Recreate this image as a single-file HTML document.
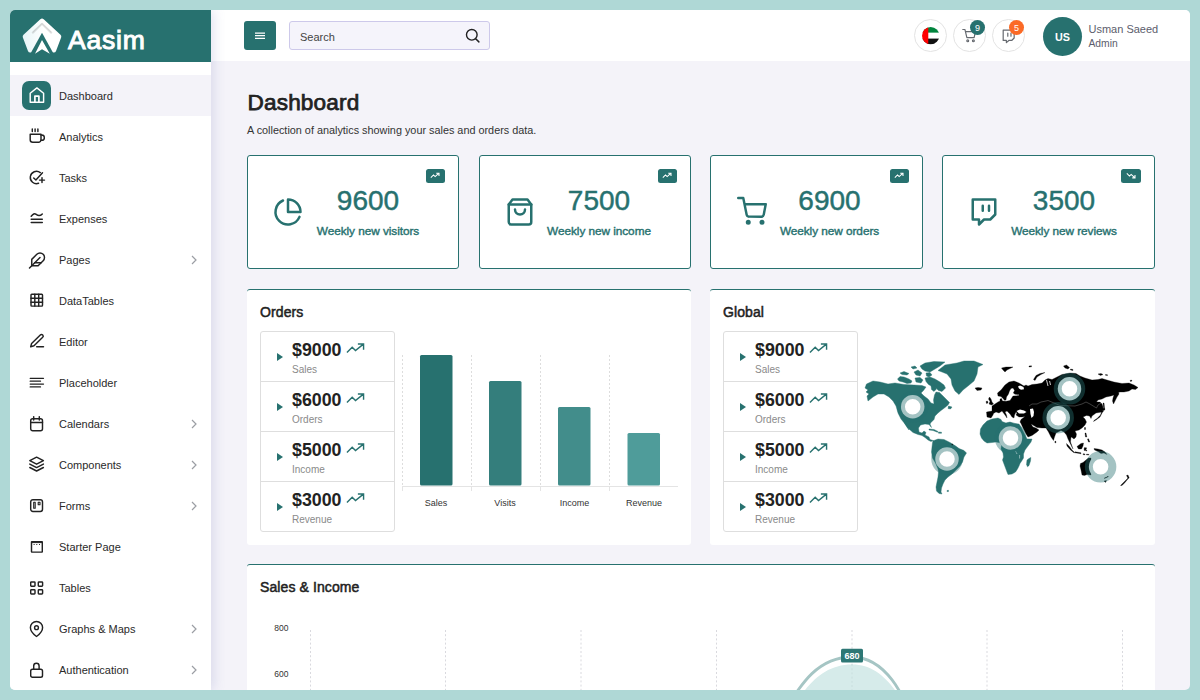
<!DOCTYPE html>
<html><head><meta charset="utf-8"><title>Dashboard</title>
<style>
*{box-sizing:border-box;margin:0;padding:0}
html,body{width:1200px;height:700px;overflow:hidden}
body{background:#afd8d6;font-family:"Liberation Sans",sans-serif;color:#222;position:relative}
.app{position:absolute;left:10px;top:10px;width:1180px;height:680px;border-radius:5px;overflow:hidden;background:#f4f3f9}
.side{position:absolute;left:0;top:0;width:201px;height:680px;background:#fff;box-shadow:3px 0 11px rgba(90,95,170,.17)}
.brand{position:absolute;left:0;top:0;width:201px;height:52px;background:#27716f}
.brand .t{position:absolute;left:58px;top:15px;font-size:26.5px;font-weight:400;color:#fff;line-height:30px;-webkit-text-stroke:1px #fff;letter-spacing:.8px}
.nav{position:absolute;left:0;top:65px;width:201px}
.it{position:relative;height:41px}
.it.act{background:#f4f3f9}
.it .ic{position:absolute;left:12px;top:6px;width:29px;height:29px;border-radius:7px}
.it.act .ic{background:#27716f}
.it .ic svg{position:absolute;left:6px;top:6px;width:18px;height:18px;fill:none;stroke:#222;stroke-width:1.45;stroke-linecap:round;stroke-linejoin:round}
.it.act .ic svg{stroke:#fff}
.it .lb{position:absolute;left:49px;top:0;line-height:42px;font-size:11px;color:#2a2a2a;white-space:nowrap}
.it .ch{position:absolute;left:180px;top:15.5px;width:8px;height:10px}
.top{position:absolute;left:201px;top:0;width:979px;height:51.400px;background:#fff}
.main{position:absolute;left:201px;top:52px;width:979px;height:628px}
.tg{position:absolute;left:33px;top:11px;width:32px;height:29px;border-radius:3px;background:#27716f}
.tg svg{position:absolute;left:11px;top:11.2px;width:10px;height:8px}
.sr{position:absolute;left:78px;top:11px;width:201px;height:29px;border:1px solid #cdc9ea;border-radius:3px;background:#f5f4fb}
.sr span{position:absolute;left:10px;top:1px;line-height:29px;font-size:11px;color:#444}
.sr svg{position:absolute;left:174px;top:5px;width:17px;height:17px;fill:none;stroke:#222;stroke-width:2;stroke-linecap:round}
.cb{position:absolute;top:9px;width:33px;height:33px;margin-left:-1px;border-radius:50%;border:1px solid #e3e3e3;background:#fff}
.cb .flag{position:absolute;left:7.3px;top:7.2px;width:17.400px;height:17.400px}
.cb .ci{position:absolute;left:7px;top:7.3px;width:17px;height:17px;fill:none;stroke:#666a70;stroke-width:1.700;stroke-linejoin:round;stroke-linecap:round}
.bd{position:absolute;left:16px;top:.3px;width:15px;height:15px;border-radius:50%;color:#fff;font-size:9px;line-height:16.5px;text-align:center}
.av{position:absolute;left:832px;top:7px;width:39px;height:39px;border-radius:50%;background:#27716f;color:#fff;font-weight:700;font-size:10.8px;line-height:41.5px;text-align:center}
.un{position:absolute;left:877.5px;top:12px;font-size:11px;line-height:14px;color:#5c5d6c;white-space:nowrap}
.ur{position:absolute;left:877.5px;top:27px;font-size:10.3px;line-height:14px;color:#5c5d6c}
.h1{position:absolute;left:36.5px;top:27px;font-size:22.6px;font-weight:400;line-height:28px;color:#222;letter-spacing:.15px;-webkit-text-stroke:.75px #222}
.sub{position:absolute;left:36px;top:61px;font-size:10.850px;line-height:14px;color:#333;white-space:nowrap}
.st{position:absolute;top:93px;width:212px;height:114px;border:1px solid #27716f;border-radius:3px;background:#fff}
.st .si{position:absolute;left:25px;top:41px;width:30px;height:30px;fill:none;stroke:#27716f;stroke-width:2;stroke-linecap:round;stroke-linejoin:round}
.st .sn{position:absolute;left:20px;width:200px;top:27px;text-align:center;font-size:28px;line-height:36px;color:#27716f;-webkit-text-stroke:.45px #27716f}
.st .sl{position:absolute;left:20px;width:200px;top:68px;text-align:center;font-size:11.8px;line-height:14px;color:#27716f;font-weight:400;-webkit-text-stroke:.4px #27716f;letter-spacing:-.05px}
.st .sb{position:absolute;right:13px;top:13px;width:19.5px;height:14.400px;border-radius:2.5px;background:#27716f}
.st .sb svg{position:absolute;left:4.400px;top:3.2px;width:10px;height:7px;fill:none;stroke:#fff;stroke-width:1.3}
.pn{position:absolute;background:#fff;border-top:1px solid #27716f;border-radius:3px}
.pt{position:absolute;left:13px;top:12.5px;font-size:14px;font-weight:400;line-height:18px;color:#222;letter-spacing:.1px;-webkit-text-stroke:.5px #222}
.lg{position:absolute;left:13px;top:41px;width:135px;height:201px;border:1px solid #dedede;border-radius:3px}
.li{position:relative;height:50px;border-bottom:1px solid #dedede}
.li:last-child{border-bottom:0}
.li i{position:absolute;left:16.3px;top:21.100px;width:0;height:0;border-left:6.5px solid #27716f;border-top:4.2px solid transparent;border-bottom:4.2px solid transparent}
.li b{position:absolute;left:31px;top:7px;font-size:17.8px;line-height:22px;color:#222}
.li svg{position:absolute;left:85px;top:11px;width:19px;height:11.400px;fill:none;stroke:#27716f;stroke-width:1.5}
.li span{position:absolute;left:31px;top:30.700px;font-size:10px;line-height:14px;color:#8a8a8a}
.bars{position:absolute;left:140px;top:50px;font-family:"Liberation Sans",sans-serif}
.map{position:absolute;left:150px;top:60px}
.line{position:absolute;left:0;top:0;font-family:"Liberation Sans",sans-serif}
.logo{position:absolute;left:10px;top:5px}
.s2 .sn,.s2 .sl{margin-left:-1px}
.s3 .sn,.s3 .sl{margin-left:-1.5px}
.s3 .si{margin-left:.8px;margin-top:-.8px}
.s4 .sn,.s4 .sl{margin-left:1px}
.s4 .si{margin-left:.8px}
.s4 .sb{width:20.5px}
.s4 .sb svg{left:5px}

</style></head><body>
<div class="app">
<div class="main">
<div class="h1">Dashboard</div>
<div class="sub">A collection of analytics showing your sales and orders data.</div>

<div class="st" style="left:36px"><svg class="si" viewBox="0 0 24 24"><path d="M21.2 15.900A10 10 0 1 1 8 2.8"/><path d="M22 12A10 10 0 0 0 12 2v10z"/></svg><div class="sn">9600</div><div class="sl">Weekly new visitors</div><div class="sb"><svg viewBox="0 0 12 8"><path d="M1 6.5l3.2-3.2 2 2L10.5 1.5M7.5 1.2h3.3v3.3"/></svg></div></div>
<div class="st s2" style="left:268px"><svg class="si" viewBox="0 0 24 24"><path d="M6 2L3 6v14a2 2 0 0 0 2 2h14a2 2 0 0 0 2-2V6l-3-4z"/><path d="M3 6h18"/><path d="M16 10a4 4 0 0 1-8 0"/></svg><div class="sn">7500</div><div class="sl">Weekly new income</div><div class="sb"><svg viewBox="0 0 12 8"><path d="M1 6.5l3.2-3.2 2 2L10.5 1.5M7.5 1.2h3.3v3.3"/></svg></div></div>
<div class="st s3" style="left:499px;width:213px"><svg class="si" viewBox="0 0 24 24"><path d="M1 1.5h4l2.700 13.400a2 2 0 0 0 2 1.6h9.700a2 2 0 0 0 2-1.6L23 6.5H6"/><circle cx="9" cy="21" r="1"/><circle cx="20" cy="21" r="1"/></svg><div class="sn">6900</div><div class="sl">Weekly new orders</div><div class="sb"><svg viewBox="0 0 12 8"><path d="M1 6.5l3.2-3.2 2 2L10.5 1.5M7.5 1.2h3.3v3.3"/></svg></div></div>
<div class="st s4" style="left:731px;width:213px"><svg class="si" viewBox="0 0 24 24"><path d="M21 2H3v16h5v4l4-4h5l4-4V2z"/><path d="M11 7v4M16 7v4"/></svg><div class="sn">3500</div><div class="sl">Weekly new reviews</div><div class="sb"><svg viewBox="0 0 12 8"><path d="M1 1.5l3.2 3.2 2-2L10.5 6.5M7.5 6.8h3.3V3.5"/></svg></div></div>

<div class="pn" style="left:36px;top:227px;width:444px;height:256px"><div class="pt">Orders</div>
<div class="lg"><div class="li"><i></i><b>$9000</b><svg viewBox="0 0 20 12"><path d="M1 10l5.5-5.5 3.5 3.5L18 1.5M12.5 1h6v6"/></svg><span>Sales</span></div><div class="li"><i></i><b>$6000</b><svg viewBox="0 0 20 12"><path d="M1 10l5.5-5.5 3.5 3.5L18 1.5M12.5 1h6v6"/></svg><span>Orders</span></div><div class="li"><i></i><b>$5000</b><svg viewBox="0 0 20 12"><path d="M1 10l5.5-5.5 3.5 3.5L18 1.5M12.5 1h6v6"/></svg><span>Income</span></div><div class="li"><i></i><b>$3000</b><svg viewBox="0 0 20 12"><path d="M1 10l5.5-5.5 3.5 3.5L18 1.5M12.5 1h6v6"/></svg><span>Revenue</span></div></div>
<svg class="bars" viewBox="0 0 300 190" width="300" height="190"><path d="M15.5 15V146" stroke="#ddd" stroke-width="1" stroke-dasharray="2 2"/><path d="M84.5 15V146" stroke="#ddd" stroke-width="1" stroke-dasharray="2 2"/><path d="M153.5 15V146" stroke="#ddd" stroke-width="1" stroke-dasharray="2 2"/><path d="M222.5 15V146" stroke="#ddd" stroke-width="1" stroke-dasharray="2 2"/><path d="M15 146.5H291" stroke="#e4e4e4" stroke-width="1"/><path d="M15.5 146V151" stroke="#e4e4e4" stroke-width="1"/><path d="M84.5 146V151" stroke="#e4e4e4" stroke-width="1"/><path d="M153.5 146V151" stroke="#e4e4e4" stroke-width="1"/><path d="M222.5 146V151" stroke="#e4e4e4" stroke-width="1"/><rect x="33" y="15" width="32.5" height="130.5" rx="1.5" fill="#27716f"/><rect x="102" y="41" width="32.5" height="104.5" rx="1.5" fill="#347e7c"/><rect x="171" y="67" width="32.5" height="78.5" rx="1.5" fill="#428d8b"/><rect x="240.5" y="93" width="32.5" height="52.5" rx="1.5" fill="#4f9c9a"/><text x="49" y="165.5" text-anchor="middle" font-size="9" fill="#333">Sales</text><text x="118" y="165.5" text-anchor="middle" font-size="9" fill="#333">Visits</text><text x="187.5" y="165.5" text-anchor="middle" font-size="9" fill="#333">Income</text><text x="257" y="165.5" text-anchor="middle" font-size="9" fill="#333">Revenue</text></svg>
</div>
<div class="pn" style="left:499px;top:227px;width:445px;height:256px"><div class="pt">Global</div>
<div class="lg"><div class="li"><i></i><b>$9000</b><svg viewBox="0 0 20 12"><path d="M1 10l5.5-5.5 3.5 3.5L18 1.5M12.5 1h6v6"/></svg><span>Sales</span></div><div class="li"><i></i><b>$6000</b><svg viewBox="0 0 20 12"><path d="M1 10l5.5-5.5 3.5 3.5L18 1.5M12.5 1h6v6"/></svg><span>Orders</span></div><div class="li"><i></i><b>$5000</b><svg viewBox="0 0 20 12"><path d="M1 10l5.5-5.5 3.5 3.5L18 1.5M12.5 1h6v6"/></svg><span>Income</span></div><div class="li"><i></i><b>$3000</b><svg viewBox="0 0 20 12"><path d="M1 10l5.5-5.5 3.5 3.5L18 1.5M12.5 1h6v6"/></svg><span>Revenue</span></div></div>
<svg class="map" viewBox="860 350 290 150" width="290" height="150"><g stroke-linejoin="round"><path d="M865 388L866.5 384L873 381L880 382L888 384L895 383L904 384.5L914 385L922 385.5L926 387L923.5 390.5L921 393L924 396L928 399L931 403L934 404L933.5 400L934.5 395L936 392L939.5 392.5L942 395L946 399L949.5 402.5L948 405L945 407.5L941 410.5L938 413L935 416L934 419.5L931 422.5L930 424L931.5 427.5L929 424.5L925 424L920.5 425L918.5 428L919 432L922 433L924 431L926 432.5L925 435L929 437L930 439.5L933 440.5L931 441.5L928 440L925 437.5L922 435.5L918 434.5L913 432.5L909 429L905 424L901 419L898 413L896 406L893 401L889 397L884 394L878 394L873 397L868 401L867 396L869 394L866 392L868 390Z" fill="#27716f" stroke="#27716f" stroke-width=".4"/><path d="M904 421L905.5 422L908 427L909 430L907.5 428L905 424Z" fill="#27716f" stroke="#27716f" stroke-width=".4"/><path d="M897.5 379L900 376.5L904 377L909 379L912 381L911 383L907 383.5L903 382L899 381Z" fill="#27716f" stroke="#27716f" stroke-width=".4"/><path d="M900 373L904 371.5L909 373.5L907 375L902 374.5Z" fill="#27716f" stroke="#27716f" stroke-width=".4"/><path d="M920 366L925 363L934 361.5L945 362L940 366L935 369L930 372L925 371L922 369Z" fill="#27716f" stroke="#27716f" stroke-width=".4"/><path d="M925 378L930 377L935 379L940 382L944 385L945.5 388L942 391.5L938.5 390.5L936 388L932 386.5L928.5 384.5L926 381.5Z" fill="#27716f" stroke="#27716f" stroke-width=".4"/><path d="M914 372L918 370L922 373L920 376L916 375Z" fill="#27716f" stroke="#27716f" stroke-width=".4"/><path d="M915 378L920 377.5L923 380L921 383L916 382Z" fill="#27716f" stroke="#27716f" stroke-width=".4"/><path d="M911 367L915 366L917 368L913 369Z" fill="#27716f" stroke="#27716f" stroke-width=".4"/><path d="M931 385.5L935 386L936.5 389L934 391.5L931.5 389.5Z" fill="#27716f" stroke="#27716f" stroke-width=".4"/><path d="M926 373L930 372.5L932 375L929 377L926.5 376Z" fill="#27716f" stroke="#27716f" stroke-width=".4"/><path d="M948.5 406L952 407L950.5 409L948 408.5Z" fill="#27716f" stroke="#27716f" stroke-width=".4"/><path d="M938 370.5L945 365L957 363L964 361L974 361L983 364.5L978 367L977 374L974 381L968 386L963 390L959 394.5L955 391L952 385L951 379L947 374L942 372Z" fill="#27716f" stroke="#27716f" stroke-width=".4"/><path d="M929 429L934 429.5L938 431.5L937.5 432.3L933 430.5L929 430Z" fill="#27716f" stroke="#27716f" stroke-width=".4"/><path d="M938.5 432L941.5 432.2L941.5 433.3L938.5 433.2Z" fill="#27716f" stroke="#27716f" stroke-width=".4"/><path d="M933 440.5L934 440.5L938 439L944 439.5L950 442.5L954 445L959 448.5L964 450.5L966.5 453L964 457L962.5 462L960 466L956 470L952 474L948 477L945 480L943 484L941.5 488L941 492L942 494L939 493.5L936.5 491L936 487L937 482L938 477L938.5 472L938 469L935.5 463L932.5 458L931.5 452L932 447L932.5 443Z" fill="#27716f" stroke="#27716f" stroke-width=".4"/><path d="M947 490.5L948.5 490.3L948.5 491.5L947 491.6Z" fill="#27716f" stroke="#27716f" stroke-width=".4"/><path d="M987 421L992 419L998 418L1001 419.5L1002 421.5L1006 423L1010 422L1014 423.5L1019 424L1021 427L1023 431L1025 435L1027 439L1032 439L1031 442L1028 446L1025 450L1023.5 454L1023.5 458L1022 460.5L1020 463.5L1019 466L1017.5 469L1015.5 472L1012 474L1008 474.5L1007 472L1005.5 468L1004 464L1002.5 460L1003.5 457L1003 453L1001 449L1001.5 445L1000 442.8L996 442L992 442.5L987 443L984 441L981.5 438L980 434L980.5 429L983 425Z" fill="#27716f" stroke="#27716f" stroke-width=".4"/><path d="M1027 460L1029 458.5L1030.8 457.5L1030.5 461L1029 465.5L1027.5 466.8L1026.5 464.5Z" fill="#27716f" stroke="#27716f" stroke-width=".4"/><path d="M987 417L986.5 412L992 411L992 406L995 404L998 402L1000 401L1000 399L1001.5 398.5L1002.5 401L1006 401.2L1010 400.5L1012 397.5L1013 396L1019 395.6L1019 394.6L1015 394.3L1013.3 393L1014.6 390.5L1013 388L1011 388.4L1009.5 391L1008.5 394L1006.5 397L1006 400L1004.5 400.3L1003 398.5L1001 396.5L998 396L997.5 393L1001 390L1005 385L1009 382L1014 381L1019 383L1024 386L1026 385L1028 386L1032 384.5L1037 384L1042 383L1045 380L1048 378.5L1052 379.5L1057 377L1062 374.5L1070 373L1076 373.5L1080 376L1085 378L1092 380L1098 379.5L1102 378.5L1107 380L1114 382L1122 383.5L1129 383L1134 385L1138 387.5L1135.5 389.5L1132 389L1129 391L1124 392L1120 392L1118.5 392.5L1119 394L1117 397L1115.5 400L1113.5 404L1112.5 401L1113 398L1114 395L1111 396L1106 397L1102 399L1098 400L1096.5 402L1100 402L1102 404L1103 407L1102 412L1096 413L1092 416L1091 418.5L1089.5 416L1086.5 415.5L1083 417L1085 419L1086.5 422L1085 425L1082 428L1079 430L1075 431L1076.5 434L1076 437L1074 439L1072 437.5L1071 437L1070.5 442L1073 449L1071.5 446L1069.5 442L1068 439L1066.5 435L1064 432L1061 430.5L1056 433L1054.5 437L1053.5 440.5L1051 437L1048.5 432L1046 428L1042 428L1037 427.5L1032 424.5L1031 424L1033 427L1036 428L1039 430L1037 432L1032 435.5L1028 437L1026 434L1023 428L1021 423.5L1020 422L1021 419.5L1025 416.5L1022 417L1019 417L1016 415L1017 413L1016 412L1014.5 415L1014 418L1012 417L1010 414L1007 411L1005 412L1006.5 415L1007 418L1005 415L1002 411L999 413L996 412L993.5 413.5L993 415L991 418Z" fill="#000" stroke="#000" stroke-width=".3"/><path d="M975 388L978 387.5L982 388L981 390L977 390.5Z" fill="#000" stroke="#000" stroke-width=".3"/><path d="M989.5 397L991 399L992 402L993.5 404L991.5 405L989 404L990 401.5L988.5 399Z" fill="#000" stroke="#000" stroke-width=".3"/><path d="M986 401.5L987.5 401L988 403L986.5 403.5Z" fill="#000" stroke="#000" stroke-width=".3"/><path d="M1001.5 368L1006 367L1013 367L1010 368.5L1007 370L1005 372L1003 370Z" fill="#000" stroke="#000" stroke-width=".3"/><path d="M1029 366L1031.5 365.8L1031.5 366.8L1029 367Z" fill="#000" stroke="#000" stroke-width=".3"/><path d="M1033.5 379.5L1036 375.5L1040 373.5L1045 372.5L1041 374.5L1037 377L1035 380.5Z" fill="#000" stroke="#000" stroke-width=".3"/><path d="M1063.5 366L1066.5 365L1069.5 367.5L1068 369L1065 368Z" fill="#000" stroke="#000" stroke-width=".3"/><path d="M1070.5 369L1073 369.5L1073 370.5L1070.5 370Z" fill="#000" stroke="#000" stroke-width=".3"/><path d="M1098 374L1101 373.5L1103 374.5L1100.5 375.5Z" fill="#000" stroke="#000" stroke-width=".3"/><path d="M1105.5 374.5L1107.5 374.8L1107.5 375.6L1105.5 375.3Z" fill="#000" stroke="#000" stroke-width=".3"/><path d="M1130 380.5L1131.5 380L1132 381L1130.5 381.5Z" fill="#000" stroke="#000" stroke-width=".3"/><path d="M1103 403L1104 403L1104.8 410L1103.8 410Z" fill="#000" stroke="#000" stroke-width=".3"/><path d="M1093.5 421.5L1096 420L1100 417L1102 413L1103.5 411L1102 410.5L1100.5 415L1097 418.5L1094 420.5Z" fill="#000" stroke="#000" stroke-width=".3"/><path d="M1102 408L1104.5 408.5L1104 410.5L1102 410.5Z" fill="#000" stroke="#000" stroke-width=".3"/><path d="M1084.5 427.5L1085.5 427.5L1085.5 429.5L1084.5 429.5Z" fill="#000" stroke="#000" stroke-width=".3"/><path d="M1085 433L1086 433L1086.8 437L1085.5 437Z" fill="#000" stroke="#000" stroke-width=".3"/><path d="M1087.5 439L1088.5 438.8L1089.8 442L1088.5 442Z" fill="#000" stroke="#000" stroke-width=".3"/><path d="M1055 441L1056 441.5L1055.8 443L1054.8 442.5Z" fill="#000" stroke="#000" stroke-width=".3"/><path d="M1066.5 443.5L1069 446L1072 450L1075 452.8L1073.5 452.5L1070 449.5L1067 446Z" fill="#000" stroke="#000" stroke-width=".3"/><path d="M1077 446.5L1081 443.5L1083.5 443L1083 446L1081.5 449L1078.5 449Z" fill="#000" stroke="#000" stroke-width=".3"/><path d="M1084.5 447.5L1087 448L1085.8 449L1087 451L1085.8 451L1085 449.5L1084.5 451L1084 449Z" fill="#000" stroke="#000" stroke-width=".3"/><path d="M1075 451.8L1081 452.8L1081 453.8L1075 452.8Z" fill="#000" stroke="#000" stroke-width=".3"/><path d="M1083 453.8L1085 454L1085 454.8L1083 454.6Z" fill="#000" stroke="#000" stroke-width=".3"/><path d="M1086.5 454.2L1089 454.4L1089 455L1086.5 454.9Z" fill="#000" stroke="#000" stroke-width=".3"/><path d="M1094 448.5L1098 449L1102 450L1105 452L1107 454.5L1104 453L1101 453.5L1098 451.5L1094.5 450Z" fill="#000" stroke="#000" stroke-width=".3"/><path d="M1120.5 485.5L1123 483L1126 480L1128.5 477.5L1127.5 479.5L1124.5 483L1122 485.5Z" fill="#000" stroke="#000" stroke-width=".3"/><path d="M1126.5 475.5L1128 475L1129.2 478L1128.2 478.5Z" fill="#000" stroke="#000" stroke-width=".3"/><path d="M1080 466L1080.5 463.5L1083 462.5L1086 460L1088.5 458L1091 458L1091 475L1087 474.5L1084.5 475.5L1082 475L1081 470Z" fill="#000" stroke="#000" stroke-width=".3"/><path d="M1104 477.5L1108 476L1108.3 476.8L1104.5 478.5Z" fill="#000" stroke="#000" stroke-width=".3"/><path d="M1104 481L1106.5 480.5L1105.5 482.5Z" fill="#000" stroke="#000" stroke-width=".3"/><path d="M1016.5 411L1020 409.5L1024 410.5L1026.5 412L1024 413.5L1019 413.5Z" fill="#fff"/><path d="M1030 409L1033 408.5L1034 412L1033.5 416L1031.5 418L1030.5 414Z" fill="#fff"/><path d="M1018 386.5L1020 385.6L1023.5 387L1024 389.3L1021 389.8L1019 388.5Z" fill="#fff"/></g><circle cx="952.2" cy="444.6" r=".8" fill="#000"/><path d="M1029 406L1032 404L1037 404L1041 402L1046 401L1048 400.5L1054 403L1060 405.5L1075 406L1082 404L1086 402L1090 404L1094 406.5L1096.5 408L1098 405L1101 403" fill="none" stroke="#fff" stroke-opacity=".6" stroke-width=".4"/><path d="M1046.5 380L1048 386M1049.6 381L1050.5 385" stroke="#fff" stroke-width=".8" fill="none"/><path d="M1015.5 451l1.5 3M1019.6 455v3.5" stroke="#cfe3e2" stroke-width=".6" fill="none"/><circle cx="912.7" cy="406.8" r="11.75" fill="#fff" stroke="#27716f" stroke-opacity=".42" stroke-width="8"/><circle cx="947" cy="459" r="11.75" fill="#fff" stroke="#27716f" stroke-opacity=".42" stroke-width="8"/><circle cx="1010.5" cy="438" r="11.75" fill="#fff" stroke="#27716f" stroke-opacity=".42" stroke-width="8"/><circle cx="1069.5" cy="388.8" r="11.75" fill="#fff" stroke="#27716f" stroke-opacity=".42" stroke-width="8"/><circle cx="1058.2" cy="417.7" r="11.75" fill="#fff" stroke="#27716f" stroke-opacity=".42" stroke-width="8"/><circle cx="1100.6" cy="466.8" r="11.75" fill="#fff" stroke="#27716f" stroke-opacity=".42" stroke-width="8"/></svg>

</div>
<div class="pn" style="left:36px;top:502px;width:908px;height:140px"><div class="pt">Sales &amp; Income</div>
<svg class="line" viewBox="247 565 908 125" width="908" height="125"><path d="M310.5 630V690" stroke="#d9d9de" stroke-width="1" stroke-dasharray="2 2.2"/><path d="M445.5 630V690" stroke="#d9d9de" stroke-width="1" stroke-dasharray="2 2.2"/><path d="M581 630V690" stroke="#d9d9de" stroke-width="1" stroke-dasharray="2 2.2"/><path d="M716.5 630V690" stroke="#d9d9de" stroke-width="1" stroke-dasharray="2 2.2"/><path d="M852 630V690" stroke="#d9d9de" stroke-width="1" stroke-dasharray="2 2.2"/><path d="M987 630V690" stroke="#d9d9de" stroke-width="1" stroke-dasharray="2 2.2"/><path d="M1122.5 630V690" stroke="#d9d9de" stroke-width="1" stroke-dasharray="2 2.2"/><text x="288.5" y="630.7" text-anchor="end" font-size="8.5" fill="#333">800</text><text x="288.5" y="676.7" text-anchor="end" font-size="8.5" fill="#333">600</text><path d="M717 778C784.5 778 784.5 664.5 852 664.5C919.5 664.5 919.5 804 987 804V830H717Z" fill="#d6ebea"/><path d="M852 664V690" stroke="#c9dede" stroke-width="1" stroke-dasharray="2 2.2"/><path d="M717 763.5C784.5 763.5 784.5 657 852 657C919.5 657 919.5 804 987 804" fill="none" stroke="#a5c5c4" stroke-width="2.8"/><rect x="841" y="648.8" width="22" height="13.6" rx="1.5" fill="#2d7775"/><text x="852" y="659" text-anchor="middle" font-size="9" font-weight="700" fill="#fff">680</text></svg>
</div>

</div>
<div class="top">
<div class="tg"><svg viewBox="0 0 10 8"><path d="M0 1h10M0 3.700h10M0 6.400h10" stroke="#fff" stroke-width="1.250" fill="none"/></svg></div>
<div class="sr"><span>Search</span><svg viewBox="0 0 24 24"><circle cx="11" cy="11" r="7.5"/><path d="M16.5 16.5L21 21"/></svg></div>
<div class="cb" style="left:704px"><svg class="flag" viewBox="0 0 18 18"><defs><clipPath id="fc"><circle cx="9" cy="9" r="9"/></clipPath></defs><g clip-path="url(#fc)"><rect width="18" height="6" fill="#00843d"/><rect y="6" width="18" height="6" fill="#fff"/><rect y="12" width="18" height="6" fill="#111"/><rect width="6.5" height="18" fill="#f00"/></g></svg></div>
<div class="cb" style="left:743px"><svg class="ci" viewBox="0 0 24 24"><path d="M2.5 3.5h3l2.8 11.5h10.2l2-8.5H7"/><circle cx="9.5" cy="19.5" r="1.3"/><circle cx="17.5" cy="19.5" r="1.3"/></svg><div class="bd" style="background:#27716f">9</div></div>
<div class="cb" style="left:782px"><svg class="ci" viewBox="0 0 24 24"><path d="M4.5 4.5h15.5v11l-3.5 3.5h-4l-3.5 3v-3H4.5z"/><path d="M11 8.5v4.5M15.5 8.5v4.5"/></svg><div class="bd" style="background:#fb6a26">5</div></div>
<div class="av">US</div>
<div class="un">Usman Saeed</div>
<div class="ur">Admin</div>

</div>
<div class="side">
<div class="brand"><svg class="logo" viewBox="20 15 45 42" width="45" height="42"><defs><linearGradient id="lg1" x1="0" x2="1" y1="0" y2="0"><stop offset="0" stop-color="#e9f6f8"/><stop offset=".55" stop-color="#fff"/></linearGradient></defs><path d="M42 21.2L58.8 36.6L53.700 50H30.3L25.2 36.6Z" fill="url(#lg1)" stroke="url(#lg1)" stroke-width="5" stroke-linejoin="round"/><path d="M32.8 32.6L42 23.8L51.2 32.6" fill="none" stroke="#000" stroke-opacity=".1" stroke-width="2.2" stroke-linecap="round" stroke-linejoin="round"/><path d="M33 32.3L42 23.6L51 32.3" fill="none" stroke="#000" stroke-opacity=".1" stroke-width="1" stroke-linecap="round" stroke-linejoin="round"/><path d="M42 32.8L30.8 53H53.2Z" fill="#27716f"/><path d="M42 40L35 53.700L42 49.3L49.8 53.700Z" fill="#fff"/></svg>
<div class="t">Aasim</div></div>
<div class="nav">
<div class="it act"><div class="ic"><svg viewBox="0 0 18 18"><path d="M2.2 15.2V6.2L8.900 .900L15.6 6.2V15.2Z"/><path d="M6.900 15V9.100H10.900V15" stroke-width="1.700"/></svg></div><div class="lb">Dashboard</div></div>
<div class="it"><div class="ic"><svg viewBox="0 0 18 18"><path d="M2.2 6.2H13v5.6a2.5 2.5 0 0 1-2.5 2.5H4.700a2.5 2.5 0 0 1-2.5-2.5Z"/><path d="M13 7h.700a2.650 2.650 0 0 1 0 5.3H13"/><path d="M4.3 1V3.400M7.100 1V3.400M9.900 1V3.400"/></svg></div><div class="lb">Analytics</div></div>
<div class="it"><div class="ic"><svg viewBox="0 0 18 18"><path d="M12.3 3.6A6.2 6.2 0 1 0 10.6 14.3"/><path d="M5.700 8.900L7.900 11.100L14.5 3.700"/><path d="M14 8.6V13.6M11.5 11.100H16.5"/></svg></div><div class="lb">Tasks</div></div>
<div class="it"><div class="ic"><svg viewBox="0 0 18 18"><path d="M3.2 6.3C5 3.900 6.5 3.100 8.2 4.400S11.6 6.700 14.3 3.900"/><path d="M3.2 9.3H14.3M3.2 12.5H14.3"/></svg></div><div class="lb">Expenses</div></div>
<div class="it"><div class="ic"><svg viewBox="0 0 18 18"><path d="M15.180 9.680a4.5 4.5 0 0 0-6.370-6.370L3.750 8.375V14.750H10.125Z"/><path d="M12 6.5L1.5 17"/><path d="M13.100 11.750H6.750"/></svg></div><div class="lb">Pages</div><svg class="ch" viewBox="0 0 8 10"><path d="M2 1l4 4-4 4" fill="none" stroke="#9b9ea4" stroke-width="1.2"/></svg></div>
<div class="it"><div class="ic"><svg viewBox="0 0 18 18"><rect x="3" y="2.3" width="11.5" height="11.8" rx=".8"/><path d="M3 6.2H14.5M3 10.2H14.5M6.8 2.3V14.100M10.700 2.3V14.100"/></svg></div><div class="lb">DataTables</div></div>
<div class="it"><div class="ic"><svg viewBox="0 0 18 18"><path d="M2.700 13.700L3.6 10.400L12.3 1.900A1.650 1.650 0 0 1 14.700 4.3L6 12.8Z"/><path d="M8.700 13.8H15.5"/></svg></div><div class="lb">Editor</div></div>
<div class="it"><div class="ic"><svg viewBox="0 0 18 18"><path d="M2.2 4.3H15.5M2.2 7.2H12.5M2.2 10.100H15.5M2.2 12.900H12.5" stroke-width="1.3"/></svg></div><div class="lb">Placeholder</div></div>
<div class="it"><div class="ic"><svg viewBox="0 0 18 18"><rect x="2.700" y="3.700" width="11.8" height="12.100" rx="2"/><path d="M2.700 7.5H14.5M5.700 1.6V5M11.3 1.6V5"/></svg></div><div class="lb">Calendars</div><svg class="ch" viewBox="0 0 8 10"><path d="M2 1l4 4-4 4" fill="none" stroke="#9b9ea4" stroke-width="1.2"/></svg></div>
<div class="it"><div class="ic"><svg viewBox="0 0 18 18"><path d="M8.6 1.2L15.400 4.700L8.6 8.2L1.8 4.700Z"/><path d="M1.8 8.100L8.6 11.6L15.400 8.100"/><path d="M1.8 11.5L8.6 15L15.400 11.5"/></svg></div><div class="lb">Components</div><svg class="ch" viewBox="0 0 8 10"><path d="M2 1l4 4-4 4" fill="none" stroke="#9b9ea4" stroke-width="1.2"/></svg></div>
<div class="it"><div class="ic"><svg viewBox="0 0 18 18"><rect x="2.700" y="2.700" width="11.8" height="11.700" rx="2.2"/><rect x="5.700" y="5.3" width="1.5" height="6" stroke-width="1.100"/><rect x="10.2" y="5.3" width="1.8" height="2.400" stroke-width="1.100"/></svg></div><div class="lb">Forms</div><svg class="ch" viewBox="0 0 8 10"><path d="M2 1l4 4-4 4" fill="none" stroke="#9b9ea4" stroke-width="1.2"/></svg></div>
<div class="it"><div class="ic"><svg viewBox="0 0 18 18"><rect x="3.5" y="3.700" width="10.8" height="10.400" rx=".3"/><path d="M3.5 4.6H14.3" stroke-width="1"/><path d="M5.6 6.5H6.6M8.3 6.5H9.3M11 6.5H12" stroke-width="1.100" stroke-linecap="butt"/></svg></div><div class="lb">Starter Page</div></div>
<div class="it"><div class="ic"><svg viewBox="0 0 18 18"><rect x="2.700" y="2.900" width="4.3" height="4.3" rx=".700"/><rect x="10.3" y="2.900" width="4.3" height="4.3" rx=".700"/><rect x="2.700" y="10.700" width="4.3" height="4.3" rx=".700"/><rect x="10.3" y="10.700" width="4.3" height="4.3" rx=".700"/></svg></div><div class="lb">Tables</div></div>
<div class="it"><div class="ic"><svg viewBox="0 0 18 18"><path d="M8.5 16.5S2.400 12.2 2.400 7.6A6.100 6.100 0 0 1 14.6 7.6C14.6 12.2 8.5 16.5 8.5 16.5Z"/><circle cx="8.5" cy="7.700" r="1.900"/></svg></div><div class="lb">Graphs &amp; Maps</div><svg class="ch" viewBox="0 0 8 10"><path d="M2 1l4 4-4 4" fill="none" stroke="#9b9ea4" stroke-width="1.2"/></svg></div>
<div class="it"><div class="ic"><svg viewBox="0 0 18 18"><rect x="2.700" y="8.2" width="11.8" height="8.100" rx="1.8"/><path d="M5.700 8.2V5A2.700 2.700 0 0 1 11.100 5V8.2"/></svg></div><div class="lb">Authentication</div><svg class="ch" viewBox="0 0 8 10"><path d="M2 1l4 4-4 4" fill="none" stroke="#9b9ea4" stroke-width="1.2"/></svg></div>
</div>
</div>
</div>
</body></html>
